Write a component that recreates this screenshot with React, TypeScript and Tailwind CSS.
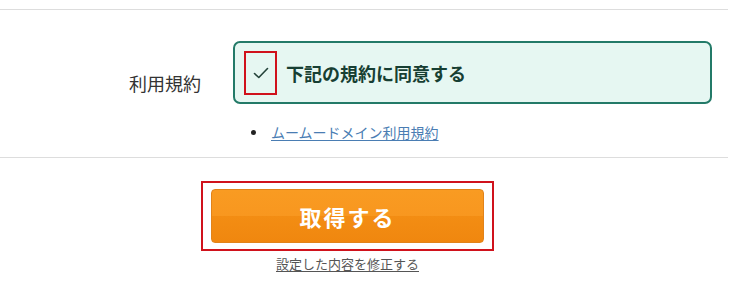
export default function App() {
  return (
    <div className="w-[731px] h-[293px] bg-white font-['Noto_Sans_CJK_JP','Noto_Sans',sans-serif] text-[#333]">
      <div className="pt-[9px]">
        <div className="border-t border-[#dddddd] w-[728px]" />
      </div>

      {/* terms row */}
      <div className="flex pt-[31px]">
        <div className="w-[201px] text-right pt-[30px] text-[18px] leading-[24px] text-[#333]">
          利用規約
        </div>
        <div className="ml-[32px] w-[479px]">
          <label className="flex items-center h-[63px] border-2 border-[#237a68] rounded-[7px] bg-[#e6f7f2] pl-[9px]">
            <span className="flex items-center justify-center w-[33px] h-[44px] border-2 border-[#d0121c]">
              <svg width="16" height="12" viewBox="0 0 16 12" fill="none">
                <path
                  d="M1.5 6.5 L5.8 10.5 L14.5 1.5"
                  stroke="#24433a"
                  strokeWidth="1.6"
                  strokeLinecap="round"
                  strokeLinejoin="round"
                />
              </svg>
            </span>
            <span className="ml-[9px] text-[18px] font-bold leading-none text-[#173f33]">
              下記の規約に同意する
            </span>
          </label>
          <ul className="mt-[18px] pl-[18px]">
            <li className="flex items-center h-[20px]">
              <span className="w-[5px] h-[5px] rounded-full bg-[#222]" />
              <a href="#" className="ml-[15px] text-[14px] leading-[20px] text-[#4a7db3] underline underline-offset-2">
                ムームードメイン利用規約
              </a>
            </li>
          </ul>
        </div>
      </div>

      <div className="mt-[15px] border-t border-[#dddddd] w-[728px]" />

      {/* submit */}
      <div className="ml-[201px] w-[293px] pt-[23px] flex flex-col items-center">
        <div className="w-[293px] h-[70px] border-2 border-[#d0121c] px-[8px] py-[6px]">
          <button className="w-full h-full rounded-[4px] border border-[#e2831a] bg-[linear-gradient(to_bottom,#f99b22_0%,#f8971f_50%,#f38d13_50%,#f0870f_100%)] text-white text-[22px] font-bold tracking-[2px]">
            取得する
          </button>
        </div>
        <a href="#" className="mt-[4px] text-[13px] leading-[18px] text-[#555] underline underline-offset-2">
          設定した内容を修正する
        </a>
      </div>
    </div>
  );
}
